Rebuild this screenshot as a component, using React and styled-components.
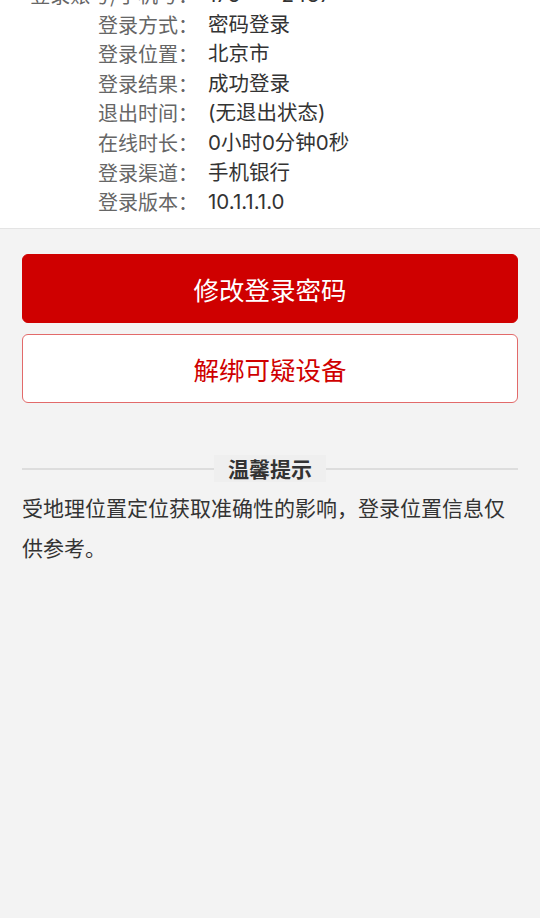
import React from "react";
import styled, { createGlobalStyle } from "styled-components";

const GlobalStyle = createGlobalStyle`
  html, body {
    margin: 0;
    padding: 0;
    background: #f3f3f3;
    font-family: "Noto Sans CJK SC", "Noto Sans", sans-serif;
    overflow: hidden;
  }
`;

const Page = styled.div`
  min-height: 918px;
  background: #f3f3f3;
`;

const InfoCard = styled.section`
  background: #ffffff;
  margin-top: -20px;
  padding: 0 0 11.5px;
  border-bottom: 1px solid #e4e4e4;
`;

const Row = styled.div`
  display: grid;
  grid-template-columns: 198px 1fr;
  font-size: 20px;
  line-height: 29.6px;
  white-space: nowrap;
`;

const Label = styled.span`
  text-align: right;
  color: #666666;
`;

const Value = styled.span`
  padding-left: 10px;
  color: #333333;
  font-family: Inter, "Noto Sans CJK SC", sans-serif;
  font-size: 20.5px;
`;

const Actions = styled.div`
  display: flex;
  flex-direction: column;
  gap: 11px;
  padding: 25px 22px 0;
`;

const Button = styled.button`
  height: 69px;
  border-radius: 6px;
  font-family: inherit;
  font-size: 25.5px;
  cursor: pointer;
  border: 1px solid ${(p) => (p.$primary ? "#cf0000" : "#e26a6a")};
  background: ${(p) => (p.$primary ? "#cf0000" : "#ffffff")};
  color: ${(p) => (p.$primary ? "#ffffff" : "#cf0000")};
  padding: 0;
`;

const Tips = styled.section`
  padding: 52px 22px 0;
`;

const TipHeader = styled.div`
  display: flex;
  align-items: center;
`;

const Line = styled.div`
  flex: 1;
  height: 1.5px;
  background: #dddddd;
`;

const TipTitle = styled.div`
  padding: 0 14px;
  background: #efefef;
  font-size: 21px;
  font-weight: bold;
  line-height: 27px;
  color: #333333;
`;

const TipText = styled.p`
  margin: 5px 0 0;
  font-size: 21px;
  line-height: 40px;
  color: #333333;
`;

const rows = [
  ["登录账号/手机号：", "176****2437"],
  ["登录方式：", "密码登录"],
  ["登录位置：", "北京市"],
  ["登录结果：", "成功登录"],
  ["退出时间：", "(无退出状态)"],
  ["在线时长：", "0小时0分钟0秒"],
  ["登录渠道：", "手机银行"],
  ["登录版本：", "10.1.1.1.0"],
];

export default function App() {
  return (
    <Page>
      <GlobalStyle />
      <InfoCard>
        {rows.map(([l, v]) => (
          <Row key={l}>
            <Label>{l}</Label>
            <Value>{v}</Value>
          </Row>
        ))}
      </InfoCard>
      <Actions>
        <Button $primary>修改登录密码</Button>
        <Button>解绑可疑设备</Button>
      </Actions>
      <Tips>
        <TipHeader>
          <Line />
          <TipTitle>温馨提示</TipTitle>
          <Line />
        </TipHeader>
        <TipText>
          受地理位置定位获取准确性的影响，登录位置信息仅供参考。
        </TipText>
      </Tips>
    </Page>
  );
}
